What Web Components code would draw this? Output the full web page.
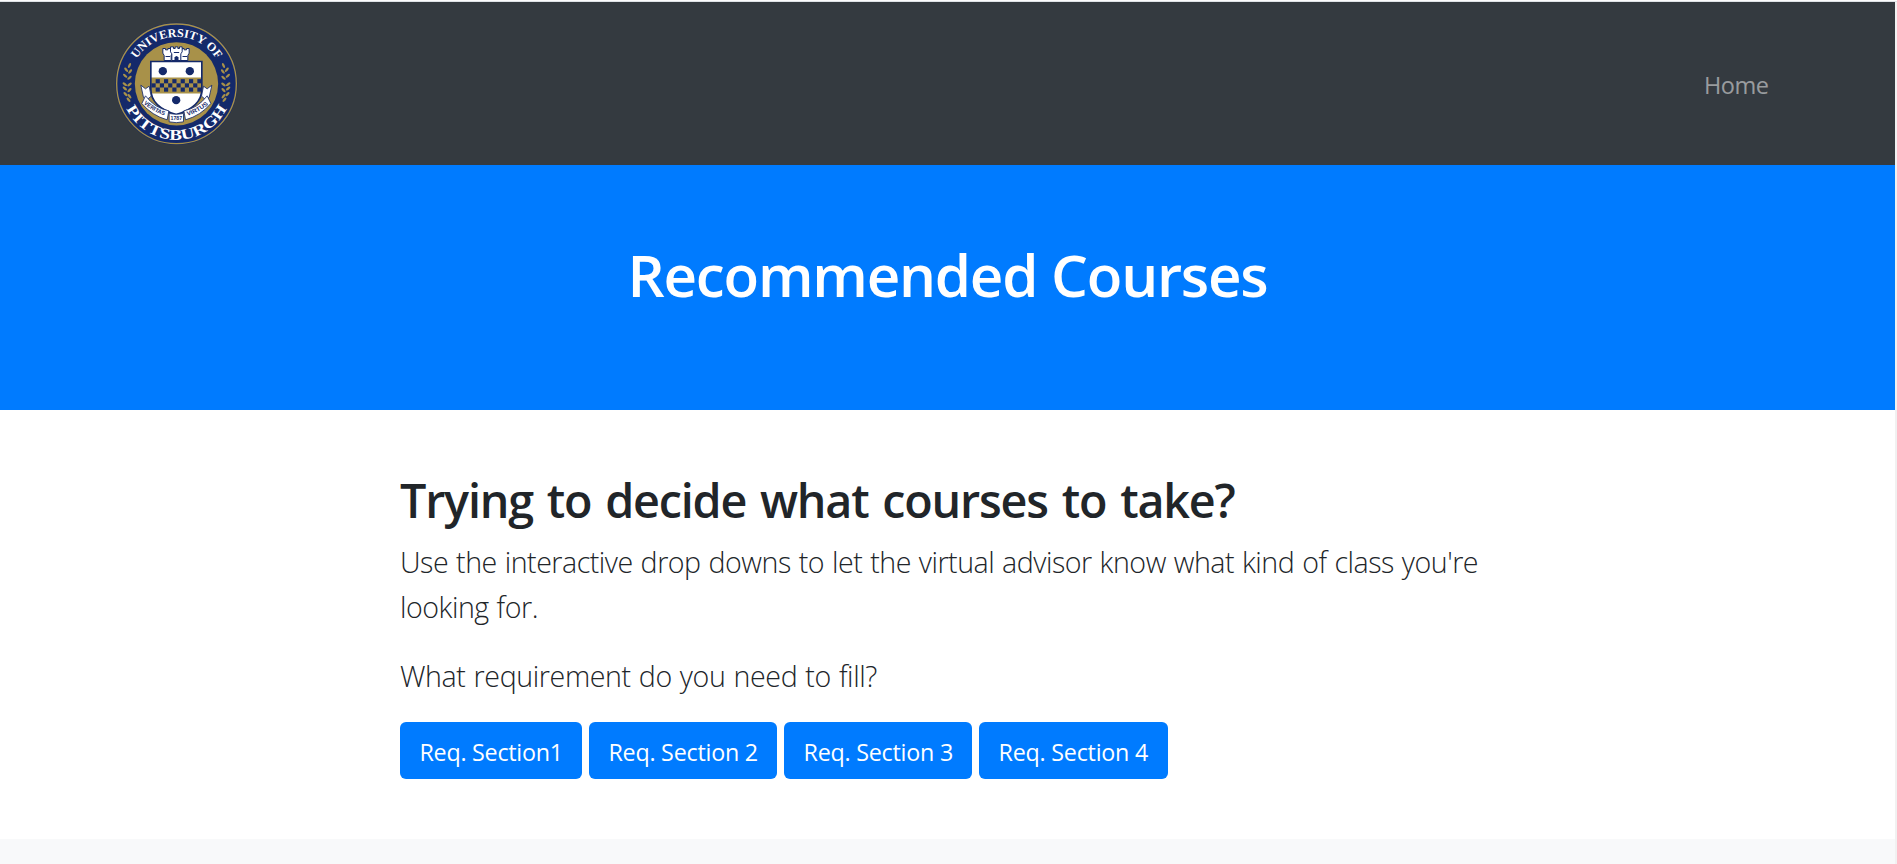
<!DOCTYPE html>
<html lang="en">
<head>
<meta charset="utf-8">
<title>Recommended Courses</title>
<style>
html,body{margin:0;height:100%}
body{font-family:"Open Sans","Noto Sans",sans-serif;color:#212529;background:#fff;overflow:hidden}
</style>
</head>
<body>
<course-page>
  <site-nav slot="nav"><fit-line width="64.5">Home</fit-line></site-nav>
  <page-hero slot="hero"><fit-line width="640">Recommended Courses</fit-line></page-hero>
  <advice-section>
    <fit-line slot="title" width="834.5">Trying to decide what courses to take?</fit-line>
    <lead-text><fit-line width="1078">Use the interactive drop downs to let the virtual advisor know what kind of class you're</fit-line><fit-line width="138">looking for.</fit-line></lead-text>
    <lead-text><fit-line width="477">What requirement do you need to fill?</fit-line></lead-text>
    <req-button slot="actions"><fit-line width="143.3">Req. Section1</fit-line></req-button>
    <req-button slot="actions"><fit-line width="149.5">Req. Section 2</fit-line></req-button>
    <req-button slot="actions"><fit-line width="149.5">Req. Section 3</fit-line></req-button>
    <req-button slot="actions"><fit-line width="149.5">Req. Section 4</fit-line></req-button>
  </advice-section>
</course-page>
<script>
const define = (name, html, ready) => customElements.define(name, class extends HTMLElement {
  constructor() {
    super();
    this.attachShadow({mode: "open"}).innerHTML = html;
  }
  connectedCallback() { if (ready) ready(this); }
});

define("course-page", `<style>
:host{display:grid;grid-template-columns:1fr 2px;height:864px;box-sizing:border-box;border-top:1px solid #fcfcfd;background:#f1f1f1}
main{display:flex;flex-direction:column;background:#f8f9fa;border-top:1px solid #dee2e6}
aside{background:#f1f1f1;border-top:1px solid #dee2e6}
</style><main><slot name="nav"></slot><slot name="hero"></slot><slot></slot></main><aside></aside>`);

define("site-nav", `<style>
:host{display:flex;align-items:center;justify-content:space-between;height:163px;box-sizing:border-box;padding:0 126.5px 0 115px;background:#343a40}
a{color:rgba(255,255,255,.5);font-size:23.5px;line-height:36px;padding-top:2px}
</style><pitt-seal></pitt-seal><a><slot></slot></a>`);

define("page-hero", `<style>
:host{display:block;height:245px;box-sizing:border-box;padding-top:74px;background:#007bff;color:#fff;text-align:center}
h1{margin:0;font-size:58.3px;font-weight:600;line-height:72px}
</style><h1><slot></slot></h1>`);

define("advice-section", `<style>
:host{display:block;height:429px;box-sizing:border-box;padding:62px 0 58px 400px;background:#fff}
h2{margin:0 0 9px;font-size:46.7px;font-weight:600;line-height:57.6px;word-spacing:3px}
div{display:flex;gap:6.6px}
</style><h2><slot name="title"></slot></h2><slot></slot><div><slot name="actions"></slot></div>`);

define("lead-text", `<style>
:host{display:block;margin-bottom:24px;font-size:28.6px;font-weight:300;line-height:45px;word-spacing:1px}
::slotted(*){display:block;width:max-content}
</style><slot></slot>`);

define("req-button", `<style>
:host{display:block}
button{display:block;height:57px;margin:0;padding:3px 19.5px 0;border:0;border-radius:6px;background:#007bff;color:#fff;font:400 23.3px/54px "Open Sans","Noto Sans",sans-serif}
</style><button><slot></slot></button>`);

/* Sets its text to a fixed measure by adjusting the tracking. */
define("fit-line", `<style>
:host{display:inline-block;white-space:nowrap}
span{display:inline-block}
</style><span><slot></slot></span>`, el => requestAnimationFrame(() => {
  const span = el.shadowRoot.querySelector("span");
  const n = el.textContent.length;
  const gap = (Number(el.getAttribute("width")) - span.getBoundingClientRect().width) / n;
  span.style.letterSpacing = gap + "px";
}));

const checks = (() => {
  let s = "";
  for (let r = 0; r < 3; r++) for (let c = 0; c < 12; c++)
    if ((r + c) % 2) s += `<rect x="${135 + c * 12.5}" y="${195 + r * 12.5}" width="12.5" height="12.5"/>`;
  return s;
})();
const leaf = (x, y, a) => `<ellipse cx="${x}" cy="${y}" rx="8" ry="3.6" transform="rotate(${a} ${x} ${y})"/>`;
const sprig = [[69,154,-65],[59,167,50],[71,172,-50],[56,185,40],[69,191,-40],[55,210,35],[69,211,-35],[55,223,40],[69,228,-45],[57,240,45],[69,246,50],[66,257,50]].map(p => leaf(...p)).join("");

define("pitt-seal", `<style>
:host{display:block;width:123px;height:123px}
svg{display:block}
text{font-family:"Liberation Serif",serif;font-weight:700;fill:#fff}
.m{font-family:"Liberation Sans",sans-serif;fill:#14296a}
</style>
<svg width="123" height="123" viewBox="25.5 23.5 369 369">
<defs>
<path id="top" d="M69 209A141 141 0 0 1 351 209"/>
<path id="bottom" d="M42 209A168 168 0 0 0 378 209"/>
<path id="left" d="M108 266Q147 298 181 306"/>
<path id="right" d="M238 306Q277 297 311 266"/>
<clipPath id="sh"><path d="M133 142H286V225Q286 278 209 301Q133 278 133 225Z"/></clipPath>
</defs>
<circle cx="210" cy="209" r="183" fill="#14296a"/>
<circle cx="210" cy="209" r="179.5" fill="none" stroke="#a89149" stroke-width="4"/>
<circle cx="210" cy="209" r="125" fill="#a89149"/>
<g fill="#a89149">${sprig}<g transform="matrix(-1 0 0 1 420 0)">${sprig}</g></g>
<text font-size="36"><textPath href="#top" startOffset="79" textLength="286" lengthAdjust="spacingAndGlyphs">UNIVERSITY OF</textPath></text>
<text font-size="45"><textPath href="#bottom" startOffset="77" textLength="374" lengthAdjust="spacingAndGlyphs">PITTSBURGH</textPath></text>
<g fill="#fff" stroke="#14296a" stroke-width="3">
<path d="M173 139V124L169 117V103H177V107H184V103H192V107H198V118L194 124V139Z"/>
<path d="M222 139V124L219 118V107H226V103H233V107H240V103H248V117L244 124V139Z"/>
<path d="M196 139V119L192 113V98H201V103H206V98H214V103H219V98H227V113L223 119V139Z"/>
</g>
<path d="M204 139V130Q210 121 216 130V139Z" fill="#14296a"/>
<path d="M177 127H191M202 115H218M228 127H242" stroke="#14296a" stroke-width="3"/>
<path d="M133 142H286V225Q286 278 209 301Q133 278 133 225Z" fill="#fff"/>
<g clip-path="url(#sh)"><rect x="130" y="190" width="160" height="48" fill="#a89149"/><g fill="#14296a">${checks}</g></g>
<path d="M133 142H286V225Q286 278 209 301Q133 278 133 225Z" fill="none" stroke="#14296a" stroke-width="5"/>
<g fill="#14296a"><circle cx="169" cy="171" r="12.5"/><circle cx="250" cy="171" r="12.5"/><circle cx="209" cy="258" r="12.5"/></g>
<g fill="#fff" stroke="#14296a" stroke-width="2.5" stroke-linejoin="round">
<path d="M111 250L103 213L117 224L128 216L134 246L122 256Z"/>
<path d="M308 250L316 213L302 224L291 216L285 246L297 256Z"/>
<path d="M117 245Q145 282 187 290L182 317Q136 304 106 268Z"/>
<path d="M302 245Q274 282 232 290L237 317Q283 304 313 268Z"/>
<path d="M188 298Q209 303 231 298V323Q209 328 188 323Z"/>
</g>
<text class="m" font-size="18"><textPath href="#left" startOffset="4" textLength="72" lengthAdjust="spacingAndGlyphs">VERITAS</textPath></text>
<text class="m" font-size="18"><textPath href="#right" startOffset="5" textLength="72" lengthAdjust="spacingAndGlyphs">VIRTUS</textPath></text>
<text class="m" font-size="18" x="192" y="318" textLength="35" lengthAdjust="spacingAndGlyphs">1787</text>
</svg>`);
</script>
</body>
</html>
